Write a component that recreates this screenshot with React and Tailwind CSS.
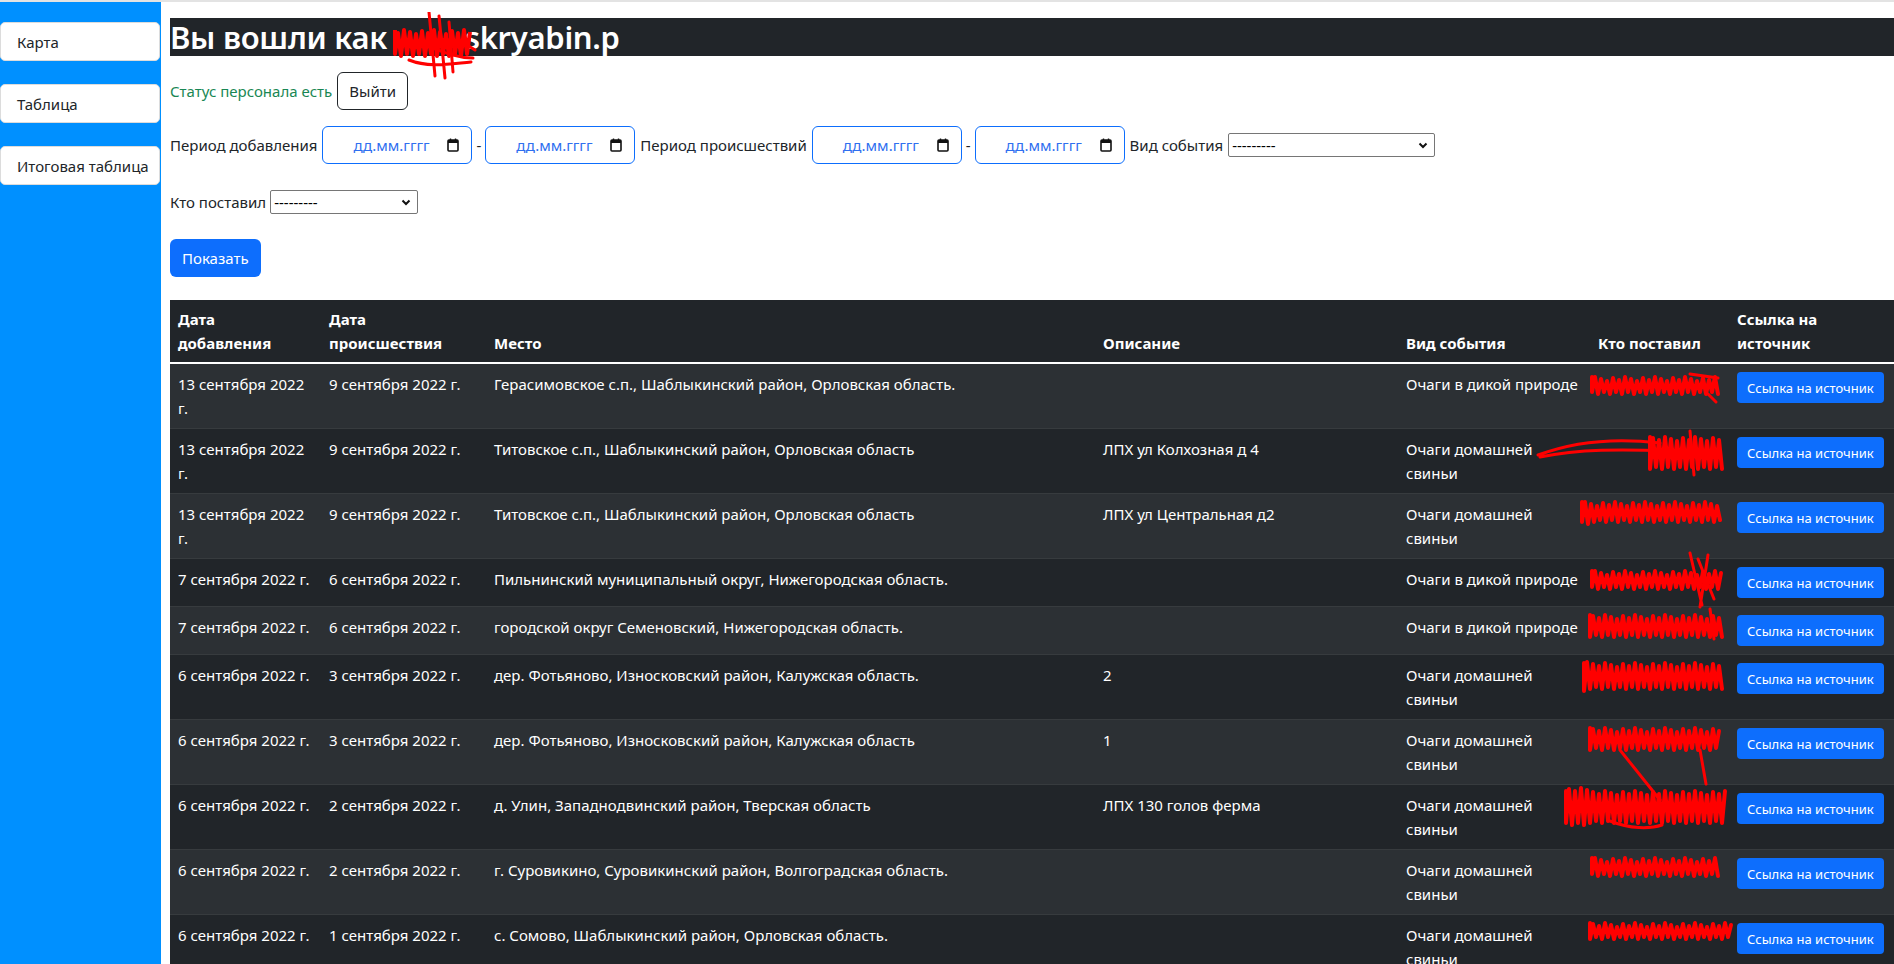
const rows = [
  ["13 сентября 2022\nг.", "9 сентября 2022 г.", "Герасимовское с.п., Шаблыкинский район, Орловская область.", "", "Очаги в дикой природе"],
  ["13 сентября 2022\nг.", "9 сентября 2022 г.", "Титовское с.п., Шаблыкинский район, Орловская область", "ЛПХ ул Колхозная д 4", "Очаги домашней\nсвиньи"],
  ["13 сентября 2022\nг.", "9 сентября 2022 г.", "Титовское с.п., Шаблыкинский район, Орловская область", "ЛПХ ул Центральная д2", "Очаги домашней\nсвиньи"],
  ["7 сентября 2022 г.", "6 сентября 2022 г.", "Пильнинский муниципальный округ, Нижегородская область.", "", "Очаги в дикой природе"],
  ["7 сентября 2022 г.", "6 сентября 2022 г.", "городской округ Семеновский, Нижегородская область.", "", "Очаги в дикой природе"],
  ["6 сентября 2022 г.", "3 сентября 2022 г.", "дер. Фотьяново, Износковский район, Калужская область.", "2", "Очаги домашней\nсвиньи"],
  ["6 сентября 2022 г.", "3 сентября 2022 г.", "дер. Фотьяново, Износковский район, Калужская область", "1", "Очаги домашней\nсвиньи"],
  ["6 сентября 2022 г.", "2 сентября 2022 г.", "д. Улин, Западнодвинский район, Тверская область", "ЛПХ 130 голов ферма", "Очаги домашней\nсвиньи"],
  ["6 сентября 2022 г.", "2 сентября 2022 г.", "г. Суровикино, Суровикинский район, Волгоградская область.", "", "Очаги домашней\nсвиньи"],
  ["6 сентября 2022 г.", "1 сентября 2022 г.", "с. Сомово, Шаблыкинский район, Орловская область.", "", "Очаги домашней\nсвиньи"],
];

// redaction scribbles, coords relative to the "Кто поставил" cell
const scribbles = [
  { x0: 2, x1: 130, y0: 13, y1: 30, extra: "M100 10 L128 14 M118 30 L126 38" },
  { x0: 60, x1: 134, y0: 8, y1: 40, extra: "M-52 26 C-20 14, 20 8, 70 14 M-50 28 C-10 20, 30 20, 80 22 M100 2 L104 46" },
  { x0: -8, x1: 132, y0: 8, y1: 28, extra: "" },
  { x0: 2, x1: 132, y0: 12, y1: 30, extra: "M100 -6 L112 46 M118 -4 L110 48 M108 0 L124 40" },
  { x0: 0, x1: 132, y0: 8, y1: 30, extra: "M120 2 L124 32" },
  { x0: -6, x1: 132, y0: 8, y1: 34, extra: "" },
  { x0: 0, x1: 130, y0: 8, y1: 30, extra: "M30 30 L70 80 M110 30 L116 64" },
  { x0: -24, x1: 136, y0: 6, y1: 38, extra: "M20 36 C40 44, 60 44, 72 40" },
  { x0: 2, x1: 130, y0: 8, y1: 26, extra: "" },
  { x0: 0, x1: 143, y0: 8, y1: 24, extra: "" },
];

function zigzag(x0, x1, y0, y1) {
  let d = `M${x0} ${y0}`;
  let up = false;
  for (let x = x0; x <= x1; x += 3) {
    d += ` L${x} ${up ? y0 + ((x * 7) % 5) : y1 - ((x * 3) % 4)}`;
    up = !up;
  }
  return d;
}

function Scribble({ s }) {
  return (
    <svg className="absolute top-0 left-0 pointer-events-none" width="1" height="1" overflow="visible">
      <path d={zigzag(s.x0, s.x1, s.y0, s.y1)} stroke="#ff0000" strokeWidth="4" fill="none" strokeLinejoin="round" strokeLinecap="round" />
      {s.extra && <path d={s.extra} stroke="#ff0000" strokeWidth="3" fill="none" strokeLinecap="round" />}
    </svg>
  );
}

function DateBox() {
  return (
    <div className="w-[150px] h-[38px] border border-[#0d6efd] rounded-md flex items-center justify-between pl-[30px] pr-[12px] bg-white">
      <span className="text-[#2f6ff0] text-[15px]">дд.мм.гггг</span>
      <svg width="12" height="14" viewBox="0 0 12 14">
        <rect x="1" y="2" width="10" height="11" rx="1" fill="none" stroke="#111" strokeWidth="1.6" />
        <rect x="1" y="2" width="10" height="3" fill="#111" />
        <line x1="3.5" y1="0.5" x2="3.5" y2="3" stroke="#111" strokeWidth="1.4" />
        <line x1="8.5" y1="0.5" x2="8.5" y2="3" stroke="#111" strokeWidth="1.4" />
      </svg>
    </div>
  );
}

function SelectBox({ w }) {
  return (
    <div className={`${w} h-[24px] border border-[#767676] rounded-[2px] flex items-center justify-between pl-[3px] pr-[6px] bg-white text-[15px] text-black`}>
      <span className="leading-none">---------</span>
      <svg width="10" height="7" viewBox="0 0 10 7">
        <path d="M1.5 1.5 L5 5 L8.5 1.5" stroke="#111" strokeWidth="2" fill="none" />
      </svg>
    </div>
  );
}

function Lines({ text }) {
  return text.split("\n").map((t, i) => (
    <div key={i} className="whitespace-nowrap">{t}</div>
  ));
}

export default function App() {
  const navItems = ["Карта", "Таблица", "Итоговая таблица"];
  return (
    <div className="min-h-screen flex border-t-2 border-[#e3e3e3] text-[#212529] text-[15px] leading-6 overflow-hidden" style={{ fontFamily: '"Noto Sans", "Open Sans", sans-serif' }}>
      <aside className="w-[161px] shrink-0 bg-[#0090ff] pt-5 flex flex-col gap-[23px] min-h-[962px]">
        {navItems.map((n) => (
          <div key={n} className="h-[39px] w-[160px] bg-white border border-[#dcdcdc] rounded-[5px] flex items-center pl-4 text-[15px] text-[#212529]">
            {n}
          </div>
        ))}
      </aside>

      <main className="flex-1 pl-[9px] pt-4 min-w-0">
        <h1 className="bg-[#212529] text-white text-[31px] leading-[38px] font-semibold tracking-[-0.3px] whitespace-nowrap">
          Вы вошли как{" "}
          <span className="relative inline-block w-[70px] h-[30px] align-middle">
            <svg className="absolute -top-[14px] -left-[6px]" width="96" height="70" viewBox="0 0 96 70">
              <path d={zigzag(6, 82, 18, 44)} stroke="#ff0000" strokeWidth="4" fill="none" strokeLinejoin="round" />
              <path d="M40 0 L46 64 M50 4 L56 66 M60 10 L64 60 M28 34 C50 24 70 26 86 38 M8 30 C30 22 50 46 84 46 M20 48 C40 56 60 52 82 50" stroke="#ff0000" strokeWidth="3" fill="none" strokeLinecap="round" />
            </svg>
          </span>
          skryabin.p
        </h1>

        <div className="mt-4 flex items-center gap-[5px]">
          <span className="text-[#198754]">Статус персонала есть</span>
          <button className="h-[38px] px-[11px] border border-[#212529] rounded-md bg-white text-[#212529]">Выйти</button>
        </div>

        <div className="mt-4 h-[38px] flex items-center gap-[5px]">
          <span>Период добавления</span>
          <DateBox />
          <span className="-mx-[1px]">-</span>
          <DateBox />
          <span>Период происшествий</span>
          <DateBox />
          <span className="-mx-[1px]">-</span>
          <DateBox />
          <span>Вид события</span>
          <SelectBox w="w-[207px]" />
        </div>

        <div className="mt-[19px] h-[38px] flex items-center gap-[4px]">
          <span>Кто поставил</span>
          <SelectBox w="w-[148px]" />
        </div>

        <button className="mt-[18px] h-[38px] px-3 rounded-md bg-[#0d6efd] text-white">Показать</button>

        <table className="mt-[23px] w-[1724px] table-fixed border-collapse bg-[#212529] text-white">
          <colgroup>
            <col className="w-[151px]" />
            <col className="w-[165px]" />
            <col className="w-[609px]" />
            <col className="w-[303px]" />
            <col className="w-[192px]" />
            <col className="w-[139px]" />
            <col className="w-[165px]" />
          </colgroup>
          <thead>
            <tr className="border-b-2 border-white">
              {["Дата\nдобавления", "Дата\nпроисшествия", "Место", "Описание", "Вид события", "Кто поставил", "Ссылка на\nисточник"].map((h) => (
                <th key={h} className="px-2 py-[7px] text-left align-bottom font-bold">
                  <Lines text={h} />
                </th>
              ))}
            </tr>
          </thead>
          <tbody>
            {rows.map((r, i) => (
              <tr key={i} className={`border-b border-[#373b3e] ${i % 2 === 0 ? "bg-[#2c3034]" : "bg-[#212529]"}`}>
                <td className="px-2 py-2 align-top"><Lines text={r[0]} /></td>
                <td className="px-2 py-2 align-top whitespace-nowrap">{r[1]}</td>
                <td className="px-2 py-2 align-top whitespace-nowrap">{r[2]}</td>
                <td className="px-2 py-2 align-top whitespace-nowrap">{r[3]}</td>
                <td className="px-2 py-2 align-top"><Lines text={r[4]} /></td>
                <td className="px-2 py-2 align-top relative">
                  <Scribble s={scribbles[i]} />
                </td>
                <td className="px-2 py-2 align-top">
                  <button className="h-[31px] px-[10px] rounded bg-[#0d6efd] text-white text-[13px] whitespace-nowrap">Ссылка на источник</button>
                </td>
              </tr>
            ))}
          </tbody>
        </table>
      </main>
    </div>
  );
}
